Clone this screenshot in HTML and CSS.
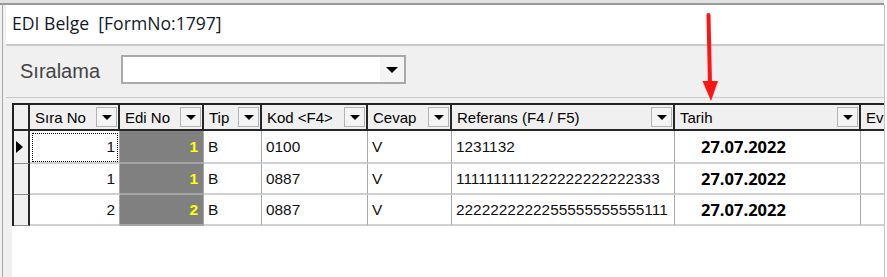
FILE: index.html
```html
<!DOCTYPE html>
<html lang="tr">
<head>
<meta charset="UTF-8">
<title>EDI Belge</title>
<link rel="stylesheet" href="styles.css">
</head>
<body>

<div class="screen">
    <div class="topbar"></div>
    <div class="main">
        <div class="gutter"></div>
        <div class="window">
            <div class="title">EDI Belge&nbsp; [FormNo:1797]</div>

            <div class="toolbar">
                <span class="toolbar-label">Sıralama</span>
                <div class="combo"><span class="combo-btn"><i class="arrow"></i></span></div>
            </div>

            <div class="grid-area">
                <div class="grid-box">
                    <table class="grid">
                        <colgroup>
                            <col style="width:16px">
                            <col style="width:90px">
                            <col style="width:84px">
                            <col style="width:58px">
                            <col style="width:106px">
                            <col style="width:84px">
                            <col style="width:223px">
                            <col style="width:186px">
                            <col style="width:100px">
                        </colgroup>
                        <thead>
                            <tr>
                                <th class="ind"></th>
                                <th><div class="head"><span>Sıra No</span><span class="drop"></span></div></th>
                                <th><div class="head"><span>Edi No</span><span class="drop"></span></div></th>
                                <th><div class="head"><span>Tip</span><span class="drop"></span></div></th>
                                <th><div class="head"><span>Kod &lt;F4&gt;</span><span class="drop"></span></div></th>
                                <th><div class="head"><span>Cevap</span><span class="drop"></span></div></th>
                                <th><div class="head"><span>Referans (F4 / F5)</span><span class="drop"></span></div></th>
                                <th><div class="head"><span>Tarih</span><span class="drop"></span></div></th>
                                <th><div class="head"><span>Ev</span></div></th>
                            </tr>
                        </thead>
                        <tbody>
                            <tr class="row-first">
                                <td class="ind"><i class="pointer"></i></td>
                                <td class="num focus">1</td>
                                <td class="edi">1</td>
                                <td>B</td>
                                <td>0100</td>
                                <td>V</td>
                                <td>1231132</td>
                                <td class="date">27.07.2022</td>
                                <td></td>
                            </tr>
                            <tr>
                                <td class="ind"></td>
                                <td class="num">1</td>
                                <td class="edi">1</td>
                                <td>B</td>
                                <td>0887</td>
                                <td>V</td>
                                <td>1111111111222222222222333</td>
                                <td class="date">27.07.2022</td>
                                <td></td>
                            </tr>
                            <tr>
                                <td class="ind"></td>
                                <td class="num">2</td>
                                <td class="edi">2</td>
                                <td>B</td>
                                <td>0887</td>
                                <td>V</td>
                                <td>2222222222255555555555111</td>
                                <td class="date">27.07.2022</td>
                                <td></td>
                            </tr>
                        </tbody>
                    </table>
                </div>
            </div>
        </div>
    </div>

    <svg class="marker" width="887" height="277" viewBox="0 0 887 277">
        <path d="M708.5 15 L710 84" stroke="#ff1414" stroke-width="4" stroke-linecap="round" fill="none"/>
        <polygon points="702.5,81 718,81 711,101" fill="#ff1414"/>
    </svg>
</div>

</body>
</html>
```

FILE: styles.css
```css
* {
    box-sizing: border-box;
}
body {
    margin: 0;
    background-color: #fff;
    font-family: "Liberation Sans", Arial, sans-serif;
    overflow: hidden;
}
.screen {
    position: relative;
    width: 887px;
    height: 277px;
    display: flex;
    flex-direction: column;
}
.topbar {
    height: 5px;
    margin-right: 3px;
    background-color: #e2e2e2;
    border-bottom: 2px solid #9a9a9a;
}
.main {
    flex: 1;
    display: flex;
    min-height: 0;
}
.gutter {
    width: 6px;
    background: linear-gradient(to right, #f0f0f0 2px, #a8a8a8 2px 3px, #f0f0f0 3px);
}
.window {
    width: 879px;
    display: flex;
    flex-direction: column;
    background-color: #f0f0f0;
    border-right: 1px solid #c4c4c4;
}
.title {
    height: 41px;
    padding: 0 0 4px 6px;
    display: flex;
    align-items: center;
    background-color: #fff;
    border-bottom: 2px solid #c9c9c9;
    font-family: "Open Sans", sans-serif;
    font-size: 17.6px;
    color: #141a2a;
}
.toolbar {
    height: 52px;
    padding-left: 14px;
    display: flex;
    align-items: center;
    border-bottom: 1px solid #c8c8c8;
}
.toolbar-label {
    width: 101px;
    font-size: 20px;
    color: #444;
}
.combo {
    width: 285px;
    height: 29px;
    margin-bottom: 4px;
    display: flex;
    justify-content: flex-end;
    background-color: #fff;
    border: 2px solid #a9a9a9;
}
.combo-btn {
    width: 24px;
    display: flex;
    align-items: center;
    justify-content: center;
    background-color: #f5f5f5;
}
.arrow {
    border-left: 6px solid transparent;
    border-right: 6px solid transparent;
    border-top: 6px solid #000;
}
.grid-area {
    flex: 1;
    min-height: 0;
    padding: 5px 0 0 6px;
}
.grid-box {
    height: 100%;
    overflow: hidden;
    background-color: #fff;
}
.grid {
    width: 949px;
    table-layout: fixed;
    border-collapse: separate;
    border-spacing: 0;
    border-top: 2px solid #222;
    border-left: 2px solid #222;
}
th {
    height: 26px;
    padding: 0;
    background-color: #f0f0f0;
    border-right: 2px solid #262626;
    border-bottom: 2px solid #262626;
    font-weight: normal;
    font-size: 15px;
    text-align: left;
    white-space: nowrap;
    overflow: hidden;
}
.head {
    display: flex;
    align-items: center;
    justify-content: space-between;
    padding: 0 1px 0 5px;
}
.drop {
    width: 21px;
    height: 20px;
    display: flex;
    align-items: center;
    justify-content: center;
    background-color: #f4f4f4;
    border: 1px solid #b4b4b4;
}
.drop::after {
    content: "";
    border-left: 5px solid transparent;
    border-right: 5px solid transparent;
    border-top: 5px solid #000;
}
td {
    height: 31px;
    padding: 0 4px;
    border-right: 1px solid #a8a8a8;
    border-bottom: 2px solid #d0d0d0;
    font-size: 15.4px;
    color: #111;
    white-space: nowrap;
    overflow: hidden;
}
.row-first td {
    height: 33px;
}
.ind {
    padding: 0 0 0 2px;
    background-color: #f0f0f0;
    border-right: 2px solid #262626;
}
td.ind {
    border-bottom: 1px solid #8c8c8c;
}
.pointer {
    display: block;
    width: 0;
    border-top: 6px solid transparent;
    border-bottom: 6px solid transparent;
    border-left: 7px solid #000;
}
.num {
    text-align: right;
}
.focus {
    outline: 1px dotted #000;
    outline-offset: -3px;
}
.edi {
    padding-right: 5px;
    background-color: #808080;
    border-bottom-color: #a4a4a4;
    color: #ffff00;
    font-weight: bold;
    text-align: right;
}
.date {
    padding-left: 26px;
    font-family: "Open Sans", sans-serif;
    font-weight: 700;
    font-size: 16.5px;
    color: #000;
}
.marker {
    position: absolute;
    top: 0;
    left: 0;
    pointer-events: none;
}
```
